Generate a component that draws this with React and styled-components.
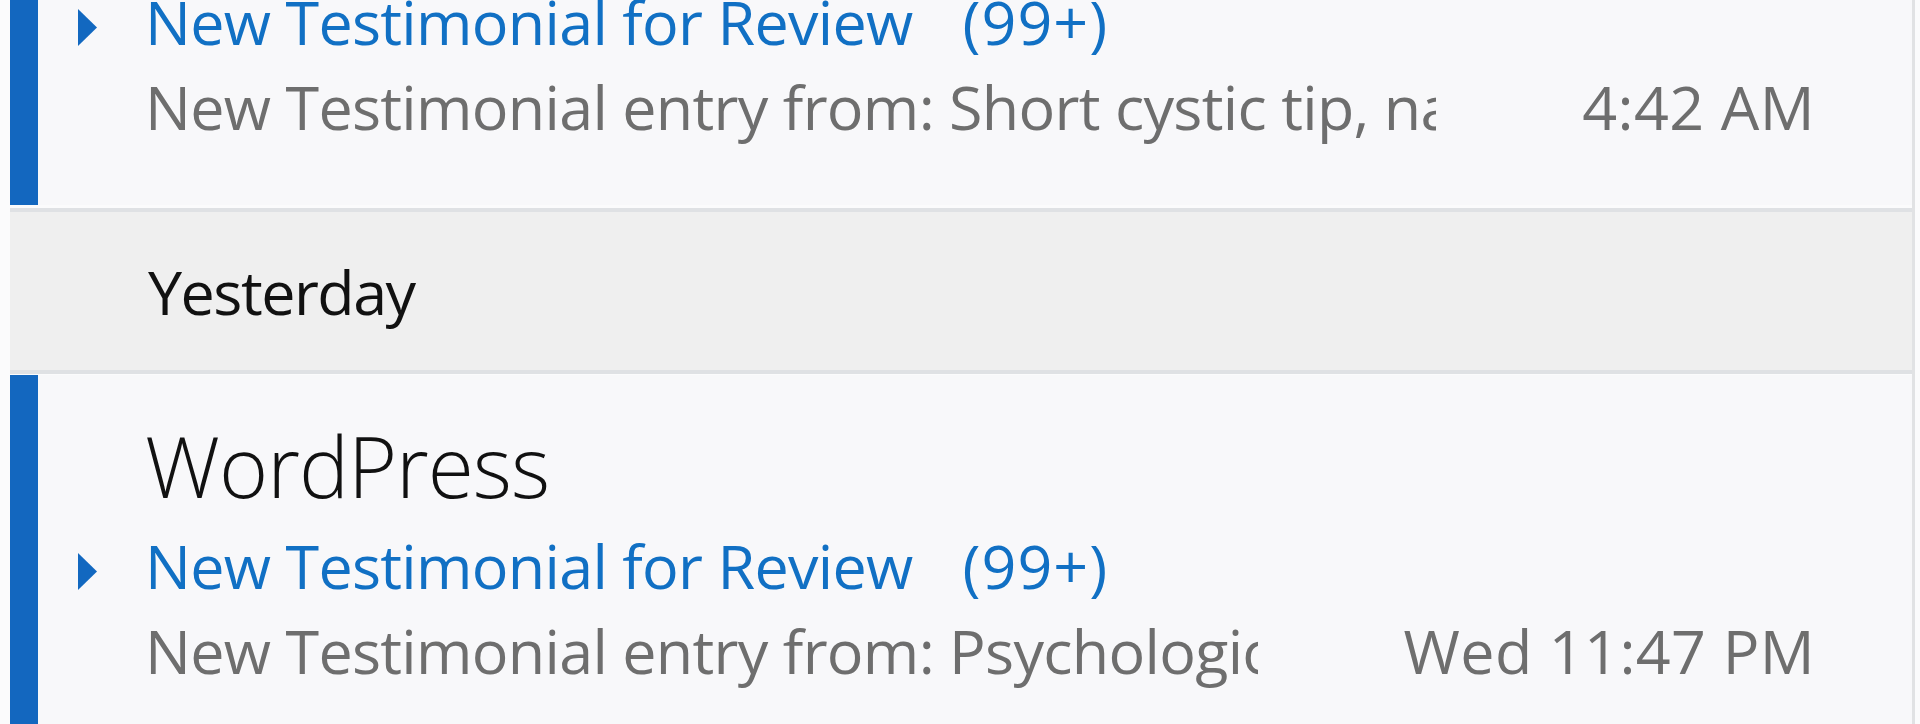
import styled, { createGlobalStyle } from 'styled-components';

const GlobalStyle = createGlobalStyle`
  html, body {
    margin: 0;
    padding: 0;
    height: 100%;
    overflow: hidden;
    background: #fbfbfc;
  }
  body {
    font-family: "Open Sans", "Noto Sans", "DejaVu Sans", sans-serif;
  }
`;

const Pane = styled.div`
  width: 1902px;
  margin: -169px 0 0 10px;
  border-right: 3px solid #e1e2e4;
`;

const Item = styled.div`
  display: grid;
  grid-template-columns: 107px minmax(0, 1fr);
  padding: 33px 97px 56px 0;
  background: #f8f8fa;
  border-left: 28px solid ${(p) => (p.$unread ? '#1367bf' : 'transparent')};
`;

const Sender = styled.div`
  grid-column: 2;
  font-size: 84px;
  font-weight: 300;
  line-height: 115px;
  letter-spacing: -1px;
  color: #111;
  white-space: nowrap;
`;

const Caret = styled.svg`
  grid-column: 1;
  align-self: center;
  margin: 12px 0 0 40px;
  width: 19px;
  height: 37px;
  fill: #1268c0;
`;

const Subject = styled.div`
  grid-column: 2;
  display: flex;
  font-size: 61px;
  line-height: 85px;
  letter-spacing: -0.7px;
  color: #1170c4;
  white-space: nowrap;
`;

const Count = styled.span`
  margin-left: 50px;
  letter-spacing: 1px;
`;

const PreviewRow = styled.div`
  grid-column: 2;
  display: flex;
  font-size: 61px;
  line-height: 85px;
  letter-spacing: -0.7px;
  color: #6e6e6e;
  white-space: nowrap;
`;

const Snippet = styled.span`
  flex: 1;
  min-width: 0;
  overflow: hidden;
`;

const Time = styled.span`
  flex: none;
  margin-left: 146px;
  letter-spacing: 0.4px;
`;

const DayHeader = styled.div`
  display: flex;
  align-items: center;
  height: 158px;
  margin: 3px 0 1px;
  padding-left: 138px;
  border-top: 4px solid #dfe1e4;
  border-bottom: 4px solid #dfe1e4;
  background: #efefef;
  font-size: 61px;
  letter-spacing: -1.5px;
  color: #111;
`;

const messages = [
  {
    sender: 'WordPress',
    subject: 'New Testimonial for Review',
    count: '(99+)',
    preview: 'New Testimonial entry from: Short cystic tip, nail fold and finger pain',
    time: '4:42 AM',
  },
  {
    group: 'Yesterday',
    sender: 'WordPress',
    subject: 'New Testimonial for Review',
    count: '(99+)',
    preview: 'New Testimonial entry from: Psychological effects of chronic illness',
    time: 'Wed 11:47 PM',
  },
];

const MessageItem = ({ msg }) => (
  <Item $unread>
    <Sender>{msg.sender}</Sender>
    <Caret viewBox="0 0 19 37">
      <polygon points="0,0 19,18.5 0,37" />
    </Caret>
    <Subject>
      {msg.subject}
      <Count>{msg.count}</Count>
    </Subject>
    <PreviewRow>
      <Snippet>{msg.preview}</Snippet>
      <Time>{msg.time}</Time>
    </PreviewRow>
  </Item>
);

export default function App() {
  return (
    <>
      <GlobalStyle />
      <Pane>
        {messages.map((msg, i) => (
          <div key={i}>
            {msg.group && <DayHeader>{msg.group}</DayHeader>}
            <MessageItem msg={msg} />
          </div>
        ))}
      </Pane>
    </>
  );
}
